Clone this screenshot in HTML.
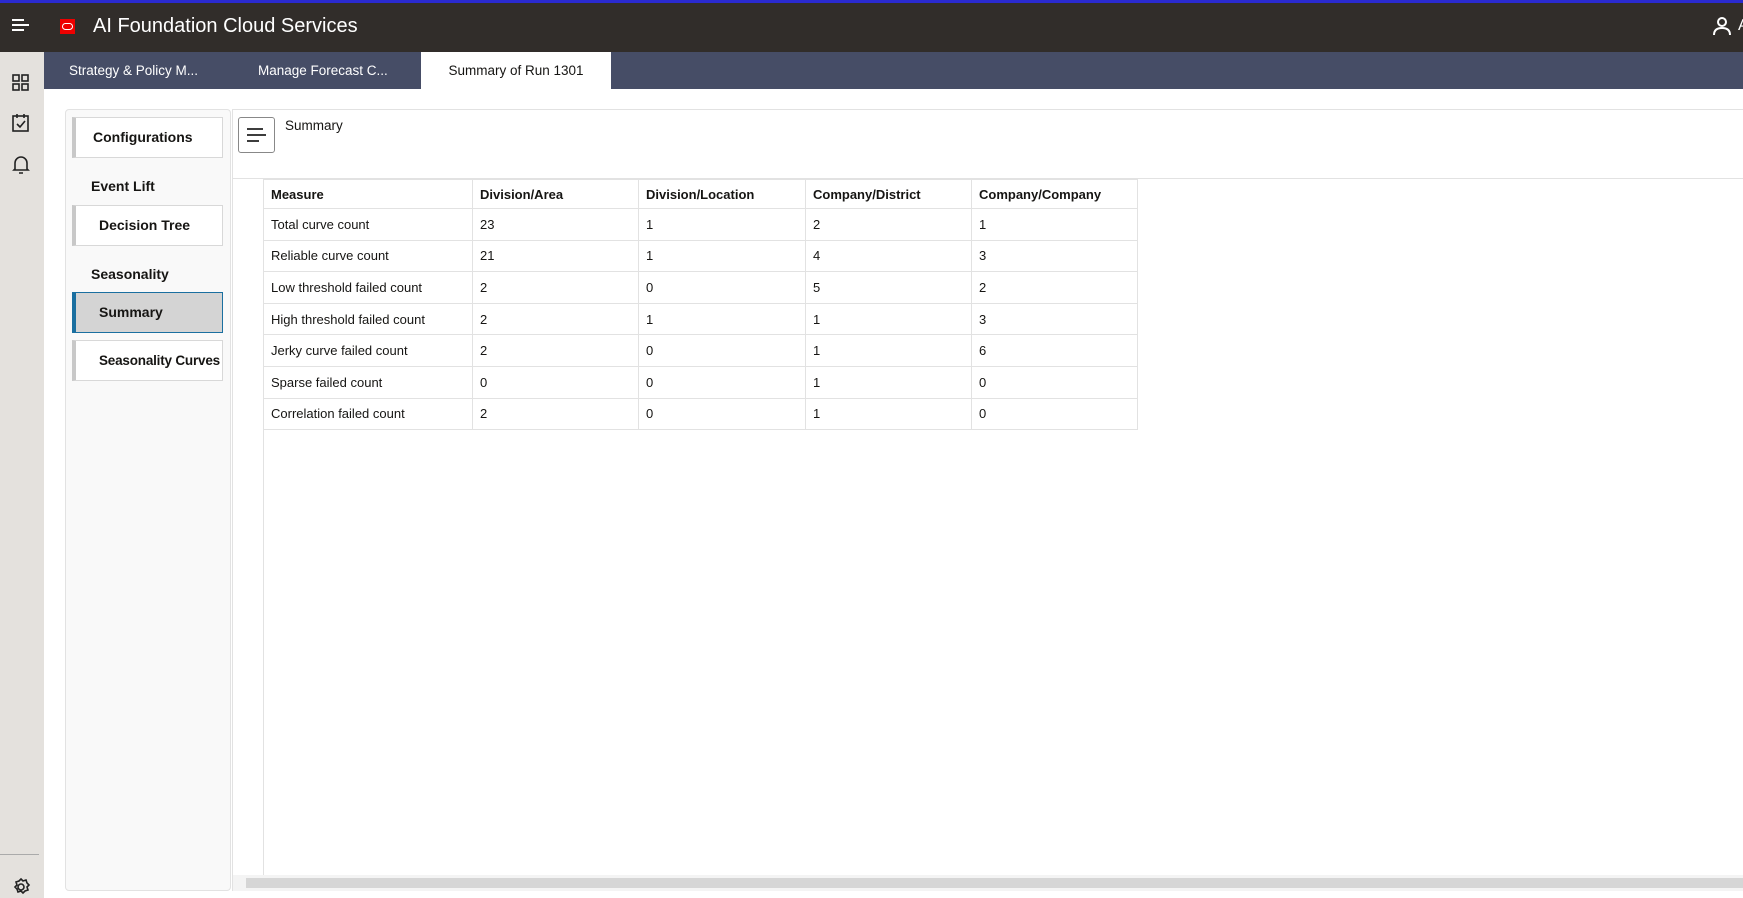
<!DOCTYPE html>
<html><head><meta charset="utf-8"><style>
*{box-sizing:border-box;margin:0;padding:0}
body{width:1743px;height:898px;overflow:hidden;background:#fff;font-family:"Liberation Sans",sans-serif;color:#161513;position:relative}
.abs{position:absolute}
.hdr{left:0;top:0;width:1743px;height:52px;background:#312d2a;border-top:3px solid #2a2ad0}
.title{left:93px;top:15px;color:#fff;font-size:20px}
.rail{left:0;top:52px;width:44px;height:846px;background:#e4e1dd}
.tabs{left:44px;top:52px;width:1699px;height:37px;background:#464d66}
.tab{top:52px;height:37px;line-height:37px;color:#fff;font-size:13.5px}
.panel{left:65px;top:109px;width:166px;height:782px;background:#f9f9f9;border:1px solid #e2e2e2;border-radius:4px}
.nb{position:absolute;left:72px;width:151px;height:41px;background:#fff;border:1px solid #d8d8d8;border-left:4px solid #c8c8c8;font-size:14px;font-weight:bold;line-height:39px;white-space:nowrap;overflow:hidden}
.lbl{position:absolute;left:91px;font-size:14px;font-weight:bold}
table{position:absolute;left:263px;top:179px;border-collapse:collapse;font-size:13px}
td{border:1px solid #e2e2e2;height:31.6px;padding-left:7px;vertical-align:middle}
tr:first-child td{height:29px;font-weight:bold}
</style></head><body>
<div class="abs hdr"></div>
<svg class="abs" style="left:11px;top:18px" width="20" height="14"><path d="M1 2h12M1 7h17M1 12h12" stroke="#fff" stroke-width="2"/></svg>
<div class="abs" style="left:60px;top:19px;width:15px;height:15px;background:#e00"><div style="margin:4px 2px;height:7px;border:1.5px solid #fff;border-radius:4px"></div></div>
<div class="abs title">AI Foundation Cloud Services</div>
<svg class="abs" style="left:1712px;top:16px" width="20" height="20"><circle cx="10" cy="6" r="4" fill="none" stroke="#fff" stroke-width="2"/><path d="M2 19c0-5 3-7 8-7s8 2 8 7" fill="none" stroke="#fff" stroke-width="2"/></svg>
<div class="abs" style="left:1738px;top:17px;color:#fff;font-size:16px">A</div>
<div class="abs rail"></div>
<svg class="abs" style="left:11px;top:73px" width="20" height="20" fill="none" stroke="#222" stroke-width="1.6"><rect x="2" y="2" width="6" height="6"/><rect x="11" y="2" width="6" height="6"/><rect x="2" y="11" width="6" height="6"/><rect x="11" y="11" width="6" height="6"/></svg>
<svg class="abs" style="left:11px;top:113px" width="20" height="20" fill="none" stroke="#222" stroke-width="1.6"><rect x="2" y="3" width="15" height="15"/><path d="M6 1v4M13 1v4M6 11l3 3 5-6"/></svg>
<svg class="abs" style="left:11px;top:154px" width="20" height="22" fill="none" stroke="#222" stroke-width="1.6"><path d="M4 15V9a6 6 0 0 1 12 0v6l1 1H3zM8 19h4"/></svg>
<div class="abs" style="left:0;top:854px;width:39px;height:1px;background:#aaa"></div>
<svg class="abs" style="left:11px;top:877px" width="20" height="20" fill="none" stroke="#222" stroke-width="1.6"><circle cx="10" cy="10" r="3"/><path d="M10 2l2 2 3-1 1 3 2 2-2 2 1 3-3 1-2 2-2-2-3 1-1-3-2-2 2-2-1-3 3-1z"/></svg>
<div class="abs tabs"></div>
<div class="abs tab" style="left:69px">Strategy &amp; Policy M...</div>
<div class="abs tab" style="left:258px">Manage Forecast C...</div>
<div class="abs tab" style="left:421px;width:190px;background:#fff;color:#161513;text-align:center">Summary of Run 1301</div>
<div class="abs panel"></div>
<div class="nb" style="top:117px;padding-left:17px">Configurations</div>
<div class="lbl" style="top:178px">Event Lift</div>
<div class="nb" style="top:205px;padding-left:23px">Decision Tree</div>
<div class="lbl" style="top:266px">Seasonality</div>
<div class="nb" style="top:292px;padding-left:23px;background:#d4d4d4;border:1px solid #1a6fa0;border-left:4px solid #1a6fa0">Summary</div>
<div class="nb" style="top:340px;padding-left:23px;font-size:13.5px;letter-spacing:-0.2px">Seasonality Curves</div>
<div class="abs" style="left:233px;top:109px;width:1510px;height:1px;background:#e2e2e2"></div>
<div class="abs" style="left:232px;top:109px;width:1px;height:782px;background:#e2e2e2"></div>
<div class="abs" style="left:238px;top:117px;width:37px;height:36px;border:1px solid #888;border-radius:3px;background:#fff"></div>
<svg class="abs" style="left:246px;top:126px" width="22" height="18"><path d="M1 3h16M1 9h19M1 15h12" stroke="#222" stroke-width="1.8"/></svg>
<div class="abs" style="left:285px;top:118px;font-size:13.5px">Summary</div>
<div class="abs" style="left:233px;top:178px;width:1510px;height:1px;background:#e2e2e2"></div>
<div class="abs" style="left:263px;top:179px;width:1px;height:697px;background:#e2e2e2"></div>
<table>
<tr><td style="width:209px">Measure</td><td style="width:166px">Division/Area</td><td style="width:167px">Division/Location</td><td style="width:166px">Company/District</td><td style="width:166px">Company/Company</td></tr>
<tr><td>Total curve count</td><td>23</td><td>1</td><td>2</td><td>1</td></tr>
<tr><td>Reliable curve count</td><td>21</td><td>1</td><td>4</td><td>3</td></tr>
<tr><td>Low threshold failed count</td><td>2</td><td>0</td><td>5</td><td>2</td></tr>
<tr><td>High threshold failed count</td><td>2</td><td>1</td><td>1</td><td>3</td></tr>
<tr><td>Jerky curve failed count</td><td>2</td><td>0</td><td>1</td><td>6</td></tr>
<tr><td>Sparse failed count</td><td>0</td><td>0</td><td>1</td><td>0</td></tr>
<tr><td>Correlation failed count</td><td>2</td><td>0</td><td>1</td><td>0</td></tr>
</table>
<div class="abs" style="left:233px;top:875px;width:1510px;height:16px;background:#f4f4f4"></div>
<div class="abs" style="left:246px;top:878px;width:1497px;height:10px;background:#d6d6d6"></div>
</body></html>
